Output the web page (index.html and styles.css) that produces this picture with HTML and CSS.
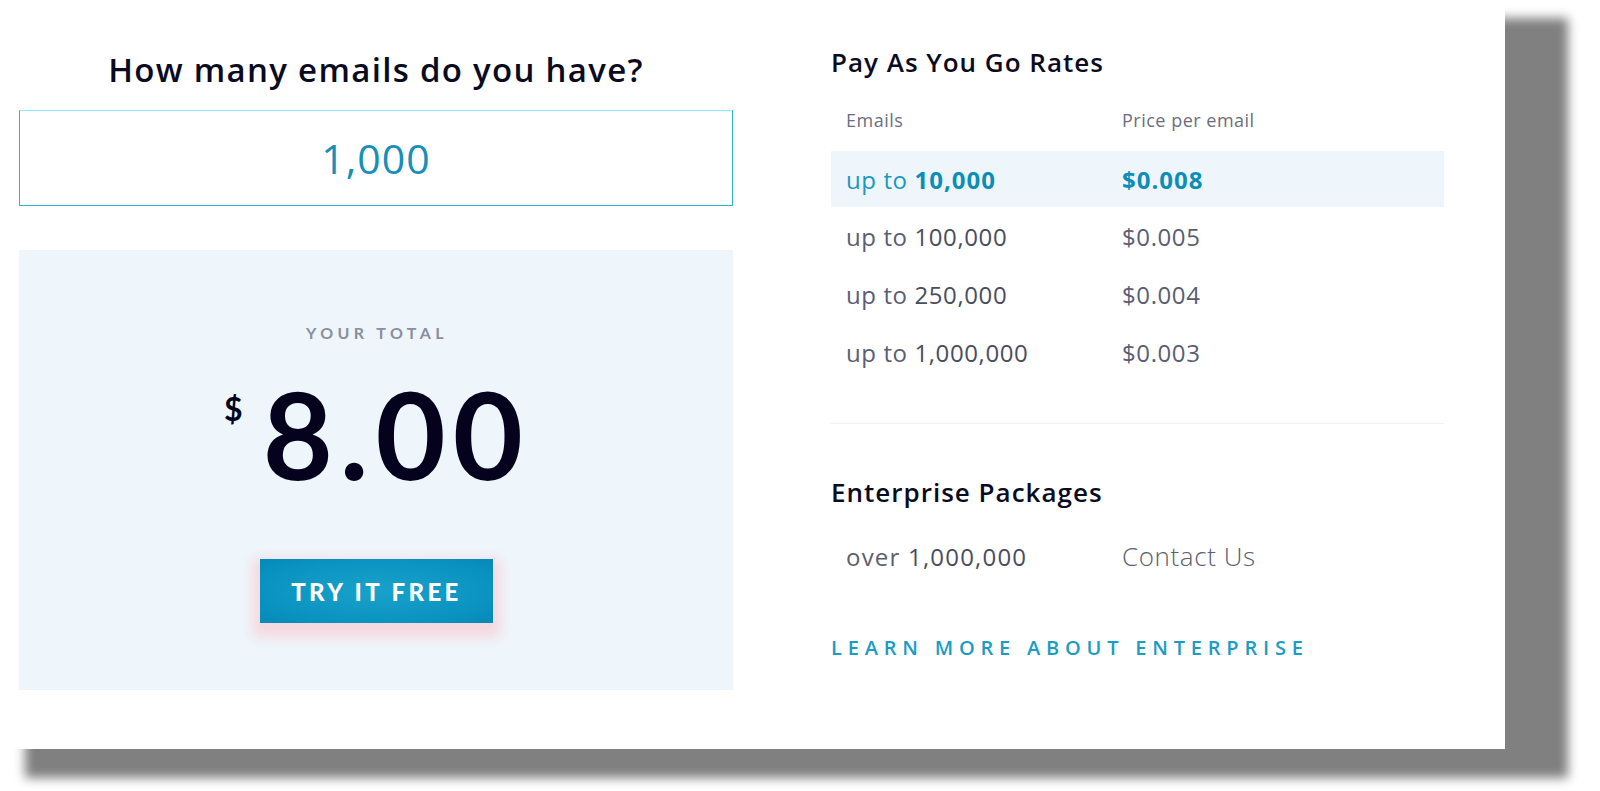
FILE: index.html
```html
<!DOCTYPE html>
<html lang="en">
<head>
<meta charset="utf-8">
<title>Pricing calculator</title>
<link rel="stylesheet" href="styles.css">
</head>
<body>
<div class="card">
  <section class="calc">
    <h2 class="question">How many emails do you have?</h2>
    <div class="count-input"><span class="count-value">1,000</span></div>
    <div class="total">
      <div class="total-label">YOUR TOTAL</div>
      <div class="amount"><span class="currency">$</span><span class="number">8.00</span></div>
      <a class="try-btn" href="#">TRY IT FREE</a>
    </div>
  </section>
  <section class="rates">
    <h3 class="rates-title">Pay As You Go Rates</h3>
    <div class="rate-table">
      <div class="rate-head"><span class="col-a">Emails</span><span class="col-b">Price per email</span></div>
      <div class="rate-row active"><span class="col-a">up to <b>10,000</b></span><span class="col-b"><b>$0.008</b></span></div>
      <div class="rate-row"><span class="col-a">up to <em>100,000</em></span><span class="col-b">$0.005</span></div>
      <div class="rate-row"><span class="col-a">up to <em>250,000</em></span><span class="col-b">$0.004</span></div>
      <div class="rate-row"><span class="col-a">up to <em>1,000,000</em></span><span class="col-b">$0.003</span></div>
    </div>
    <div class="divider"></div>
    <h3 class="rates-title ent">Enterprise Packages</h3>
    <div class="rate-row ent-row"><span class="col-a">over <em>1,000,000</em></span><span class="col-b contact">Contact Us</span></div>
    <a class="more-link" href="#">LEARN MORE ABOUT ENTERPRISE</a>
  </section>
</div>
</body>
</html>
```
FILE: styles.css
```css
html {
  height: 100%;
  overflow: hidden;
}
body {
  margin: 0;
  padding: 0;
  height: 100%;
  background: #ffffff;
  font-family: "Open Sans", "Noto Sans", sans-serif;
  color: #0b0b1f;
}
.card {
  margin: -11px 0 0 -38px;
  width: 1543px;
  height: 760px;
  box-sizing: border-box;
  background: #ffffff;
  box-shadow: 63px 29px 10px #808080;
  display: flex;
  padding-left: 57px;
  gap: 98px;
}
.calc {
  width: 714px;
  display: flex;
  flex-direction: column;
}
.question {
  margin: 61px 0 0;
  font-size: 33px;
  line-height: 40px;
  font-weight: 600;
  text-align: center;
  color: #0b0b1f;
  letter-spacing: 1.3px;
}
.count-input {
  margin-top: 20px;
  height: 96px;
  box-sizing: border-box;
  border: 1.5px solid #33aed6;
  border-top-color: #8eeef9;
  display: flex;
  align-items: center;
  justify-content: center;
}
.count-value {
  font-size: 41px;
  font-weight: 400;
  color: #1690ba;
  letter-spacing: 1px;
}
.total {
  margin-top: 44px;
  height: 440px;
  background: #eef6fc;
  display: flex;
  flex-direction: column;
  align-items: center;
}
.total-label {
  margin-top: 73px;
  font-family: "Lato", sans-serif;
  font-size: 16px;
  line-height: 20px;
  font-weight: 700;
  letter-spacing: 4.4px;
  color: #8a8e9e;
  margin-left: 2px;
}
.amount {
  margin-top: 30px;
  display: flex;
  align-items: flex-start;
  color: #05021d;
  margin-left: 2px;
}
.currency {
  font-family: "Lato", sans-serif;
  font-size: 32px;
  font-weight: 700;
  line-height: 32px;
  margin-top: 20px;
  margin-right: 20px;
}
.number {
  font-family: "Lato", sans-serif;
  font-size: 121px;
  line-height: 121px;
  font-weight: 700;
  letter-spacing: 7px;
}
.try-btn {
  margin-top: 65px;
  width: 233px;
  height: 64px;
  display: flex;
  align-items: center;
  justify-content: center;
  text-decoration: none;
  color: #ffffff;
  font-family: "Lato", sans-serif;
  font-size: 24px;
  font-weight: 900;
  letter-spacing: 3.4px;
  padding-left: 1px;
  box-sizing: border-box;
  background: radial-gradient(ellipse at center, #18a2ca 0%, #0a93c0 70%, #0689b8 100%);
  box-shadow: 0 7px 12px 7px rgba(255, 175, 180, 0.42);
}
.rates {
  width: 613px;
  display: flex;
  flex-direction: column;
}
.rates-title {
  margin: 57px 0 0;
  font-size: 26px;
  line-height: 32px;
  font-weight: 600;
  color: #0b0b1f;
  letter-spacing: 1px;
}
.rate-table {
  margin-top: 31px;
}
.rate-head {
  display: flex;
  height: 42px;
  align-items: flex-start;
  font-size: 18px;
  line-height: 22px;
  letter-spacing: 0.5px;
  color: #6b6e80;
}
.col-a {
  width: 291px;
  padding-left: 15px;
  box-sizing: border-box;
}
.col-b {
  flex: 1;
}
.rate-row {
  display: flex;
  align-items: center;
  height: 58px;
  font-size: 24px;
  letter-spacing: 0.6px;
  color: #5b5e72;
}
.rate-row em {
  font-style: normal;
  color: #4a4d60;
}
.rate-row.active {
  background: #eef6fc;
  height: 56px;
  color: #1a98c2;
}
.rate-row.active b {
  font-weight: 700;
  color: #0c8db8;
  letter-spacing: 1px;
}
.divider {
  margin-top: 42px;
  height: 1px;
  background: #eef2f6;
}
.rates-title.ent {
  margin-top: 52px;
}
.ent-row {
  margin-top: 19px;
}
.ent-row .col-a {
  letter-spacing: 1.2px;
}
.contact {
  font-size: 26px;
  font-weight: 300;
  letter-spacing: 0.6px;
  color: #5b5e72;
}
.more-link {
  margin-top: 49px;
  font-size: 20px;
  font-weight: 600;
  letter-spacing: 5.8px;
  color: #1a9cc4;
  text-decoration: none;
}
```
